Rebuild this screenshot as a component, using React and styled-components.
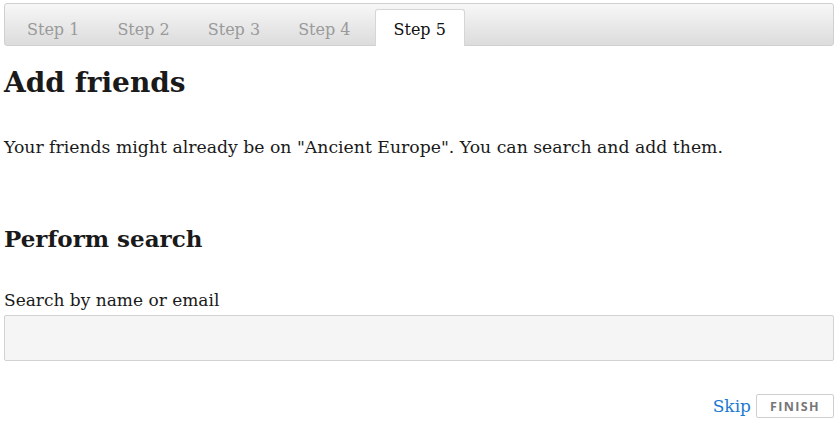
import React from "react";
import styled, { createGlobalStyle } from "styled-components";

const Global = createGlobalStyle`
  html, body { margin: 0; padding: 0; background: #fff; }
  body { font-family: "DejaVu Serif", "Liberation Serif", serif; color: #222; }
`;

const Page = styled.div`
  padding: 3px 6px 0 4px;
`;

const TabBar = styled.div`
  display: flex;
  align-items: flex-end;
  height: 43px;
  box-sizing: border-box;
  padding: 0 0 0 4px;
  border: 1px solid #d0d0d0;
  border-radius: 3px;
  background: linear-gradient(#f7f7f7, #dcdcdc);
`;

const Tab = styled.div`
  box-sizing: border-box;
  height: 37px;
  padding: 2px 18px 0 ${(p) => (p.$first ? "17px" : "18px")};
  margin-left: ${(p) => (p.$active ? "5px" : "0")};
  display: flex;
  align-items: center;
  font-size: 16px;
  margin-bottom: -1px;
  color: ${(p) => (p.$active ? "#111" : "#9a9a9a")};
  background: ${(p) => (p.$active ? "#fff" : "transparent")};
  border: 1px solid ${(p) => (p.$active ? "#d6d6d6" : "transparent")};
  border-bottom: none;
  border-radius: 3px 3px 0 0;
`;

const Title = styled.h1`
  margin: 17px 0 0;
  font-size: 28px;
  line-height: 40px;
  font-weight: 700;
  color: #1a1a1a;
`;

const Para = styled.p`
  margin: 31px 0 0;
  font-size: 17.25px;
  line-height: 26px;
  color: #1a1a1a;
`;

const SubTitle = styled.h2`
  margin: 63px 0 0;
  font-size: 23px;
  line-height: 32px;
  font-weight: 700;
  color: #1a1a1a;
`;

const Label = styled.label`
  display: block;
  margin: 32px 0 0;
  font-size: 17px;
  line-height: 26px;
  color: #1a1a1a;
`;

const Input = styled.input`
  display: block;
  box-sizing: border-box;
  width: 100%;
  height: 46px;
  margin-top: 2px;
  background: #f5f5f5;
  border: 1px solid #d2d2d2;
  border-radius: 2px;
  outline: none;
`;

const Actions = styled.div`
  display: flex;
  justify-content: flex-end;
  align-items: center;
  gap: 5px;
  margin-top: 33px;
`;

const SkipLink = styled.a`
  font-size: 17px;
  color: #1a7ad0;
  text-decoration: none;
`;

const FinishButton = styled.button`
  box-sizing: border-box;
  height: 24px;
  width: 78px;
  padding: 0;
  background: #fff;
  border: 1px solid #cfcfcf;
  border-radius: 2px;
  font-family: "Open Sans", "Liberation Sans", sans-serif;
  font-weight: 700;
  font-size: 12.5px;
  letter-spacing: 1.4px;
  color: #777;
`;

const steps = ["Step 1", "Step 2", "Step 3", "Step 4", "Step 5"];

export default function App() {
  return (
    <Page>
      <Global />
      <TabBar>
        {steps.map((s, i) => (
          <Tab key={s} $first={i === 0} $active={i === 4}>
            {s}
          </Tab>
        ))}
      </TabBar>
      <Title>Add friends</Title>
      <Para>
        Your friends might already be on "Ancient Europe". You can search and add them.
      </Para>
      <SubTitle>Perform search</SubTitle>
      <Label>Search by name or email</Label>
      <Input />
      <Actions>
        <SkipLink href="#">Skip</SkipLink>
        <FinishButton>FINISH</FinishButton>
      </Actions>
    </Page>
  );
}
